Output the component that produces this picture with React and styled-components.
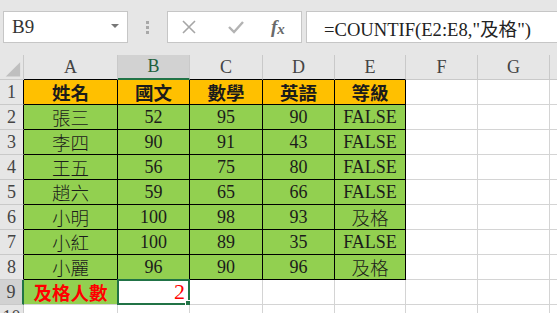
import React from "react";
import styled, { createGlobalStyle } from "styled-components";

const GlobalStyle = createGlobalStyle`
  html, body {
    margin: 0;
    padding: 0;
    background: #e6e6e6;
    overflow: hidden;
  }
`;

const SERIF = `"Liberation Serif", "Noto Sans CJK TC", serif`;

const columns = ["A", "B", "C", "D", "E", "F", "G"];

const scores = [
  ["姓名", "國文", "數學", "英語", "等級"],
  ["張三", "52", "95", "90", "FALSE"],
  ["李四", "90", "91", "43", "FALSE"],
  ["王五", "56", "75", "80", "FALSE"],
  ["趙六", "59", "65", "66", "FALSE"],
  ["小明", "100", "98", "93", "及格"],
  ["小紅", "100", "89", "35", "FALSE"],
  ["小麗", "96", "90", "96", "及格"],
];

export default function App() {
  return (
    <Page>
      <GlobalStyle />
      <FormulaBar>
        <NameBox>
          <span>B9</span>
          <DropArrow />
        </NameBox>
        <Grip>
          <i />
          <i />
          <i />
        </Grip>
        <ActionBox>
          <ActionIcon>
            <svg width="16" height="16" viewBox="0 0 16 16">
              <path d="M2 2 L14 14 M14 2 L2 14" stroke="#a6a6a6" strokeWidth="1.6" fill="none" />
            </svg>
          </ActionIcon>
          <ActionIcon>
            <svg width="18" height="16" viewBox="0 0 18 16">
              <path d="M2 8 L7 13 L16 3" stroke="#b3b3b3" strokeWidth="2.4" fill="none" />
            </svg>
          </ActionIcon>
          <FxIcon>
            f<sub>x</sub>
          </FxIcon>
        </ActionBox>
        <FormulaInput>=COUNTIF(E2:E8,"及格")</FormulaInput>
      </FormulaBar>

      <Sheet>
        <Corner>
          <svg width="24" height="25" viewBox="0 0 24 25">
            <path d="M6 22 L21 22 L21 7 Z" fill="#bfbfbf" />
          </svg>
        </Corner>
        {columns.map((c) => (
          <ColHeader key={c} $active={c === "B"} $edge={"ABCDE".includes(c)}>
            {c}
          </ColHeader>
        ))}
        <ColHeader $tail />

        {scores.map((row, r) => (
          <React.Fragment key={r}>
            <RowHeader $edge>{r + 1}</RowHeader>
            {row.map((v, c) => (
              <Cell
                key={c}
                $bg={r === 0 ? "#ffc000" : "#92d050"}
                $edge
                $bold={r === 0}
                $cjk={c === 0 || r === 0 || v === "及格"}
              >
                {v}
              </Cell>
            ))}
            <Cell />
            <Cell />
            <Cell $tail />
          </React.Fragment>
        ))}

        <RowHeader $active>9</RowHeader>
        <Cell $bg="#92d050" $color="#ff0000" $bold $cjk>
          及格人數
        </Cell>
        <Cell $align="flex-end" $color="#ff0000" $size="22px">
          2
          <Selection>
            <FillHandle />
          </Selection>
        </Cell>
        <Cell />
        <Cell />
        <Cell />
        <Cell />
        <Cell />
        <Cell $tail />

        <RowHeader>10</RowHeader>
        {columns.map((c) => (
          <Cell key={c} />
        ))}
        <Cell $tail />
      </Sheet>
    </Page>
  );
}

const Page = styled.div`
  width: 557px;
  height: 313px;
  overflow: hidden;
  background: #e6e6e6;
  font-family: ${SERIF};
`;

const FormulaBar = styled.div`
  display: flex;
  align-items: stretch;
  height: 32px;
  padding: 11px 0 12px 3px;
`;

const NameBox = styled.div`
  box-sizing: border-box;
  width: 125px;
  display: flex;
  align-items: center;
  justify-content: space-between;
  padding: 0 8px 0 8px;
  background: #fff;
  border: 1px solid #c6c6c6;
  font-family: "Liberation Serif", serif;
  font-size: 19px;
  color: #333;
`;

const DropArrow = styled.span`
  width: 0;
  height: 0;
  border-left: 4px solid transparent;
  border-right: 4px solid transparent;
  border-top: 4px solid #777;
  margin-top: -2px;
`;

const Grip = styled.div`
  width: 39px;
  display: flex;
  flex-direction: column;
  align-items: center;
  justify-content: center;
  gap: 2px;

  i {
    width: 3px;
    height: 3px;
    background: #a8a8a8;
  }
`;

const ActionBox = styled.div`
  box-sizing: border-box;
  width: 135px;
  display: flex;
  align-items: center;
  padding-left: 13px;
  background: #fff;
  border: 1px solid #c6c6c6;
  margin-right: 4px;
`;

const ActionIcon = styled.span`
  width: 46px;
  display: flex;
  align-items: center;
`;

const FxIcon = styled.span`
  font-family: "Liberation Serif", serif;
  font-style: italic;
  font-weight: bold;
  font-size: 19px;
  color: #6a6a6a;
  margin-left: -2px;

  sub {
    font-size: 15px;
    vertical-align: -1px;
  }
`;

const FormulaInput = styled.div`
  flex: 1;
  box-sizing: border-box;
  display: flex;
  align-items: center;
  padding-left: 17px;
  background: #fff;
  border: 1px solid #c6c6c6;
  border-right: none;
  font-size: 18.6px;
  color: #222;
  white-space: nowrap;
`;

const Sheet = styled.div`
  display: grid;
  grid-template-columns: 24px 94px 72px 73px 72px 71px 72px 72px 1fr;
  grid-auto-rows: 25px;
  background: #fff;
`;

const Corner = styled.div`
  background: #e6e6e6;
  border-right: 1px solid #c9c9c9;
  border-bottom: 1px solid #c9c9c9;
  box-sizing: border-box;
  display: flex;
`;

const ColHeader = styled.div`
  box-sizing: border-box;
  display: flex;
  align-items: center;
  justify-content: center;
  background: ${(p) => (p.$active ? "#d2d2d2" : "#e6e6e6")};
  border-right: 1px solid ${(p) => (p.$tail ? "transparent" : "#c9c9c9")};
  border-bottom: ${(p) =>
    p.$active ? "2px solid #217346" : p.$edge ? "1px solid #000" : "1px solid #c9c9c9"};
  font-size: 18px;
  color: ${(p) => (p.$active ? "#215f3c" : "#444")};
`;

const RowHeader = styled.div`
  box-sizing: border-box;
  display: flex;
  align-items: center;
  justify-content: center;
  background: ${(p) => (p.$active ? "#d2d2d2" : "#e6e6e6")};
  border-right: ${(p) =>
    p.$active ? "2px solid #217346" : p.$edge ? "1px solid #000" : "1px solid #c9c9c9"};
  border-bottom: 1px solid #c9c9c9;
  font-size: 18px;
  color: #444;
`;

const Cell = styled.div`
  position: relative;
  box-sizing: border-box;
  display: flex;
  align-items: center;
  justify-content: ${(p) => p.$align || "center"};
  padding: 0 4px;
  background: ${(p) => p.$bg || "#fff"};
  border-right: 1px solid ${(p) => (p.$edge ? "#000" : p.$tail ? "transparent" : "#d4d4d4")};
  border-bottom: 1px solid ${(p) => (p.$edge ? "#000" : "#d4d4d4")};
  font-family: ${(p) => (p.$cjk ? `"Noto Sans CJK TC", serif` : SERIF)};
  font-size: ${(p) => p.$size || (p.$cjk ? "18.5px" : "18px")};
  font-weight: ${(p) => (p.$bold ? "bold" : p.$cjk ? 300 : "normal")};
  color: ${(p) => p.$color || "#1b1b1b"};
  white-space: nowrap;
`;

const Selection = styled.div`
  position: absolute;
  left: -1px;
  top: -1px;
  right: -1px;
  bottom: -1px;
  border: 2px solid #217346;
  pointer-events: none;
`;

const FillHandle = styled.div`
  position: absolute;
  right: -4px;
  bottom: -4px;
  width: 5px;
  height: 5px;
  background: #217346;
  border: 1px solid #fff;
`;
